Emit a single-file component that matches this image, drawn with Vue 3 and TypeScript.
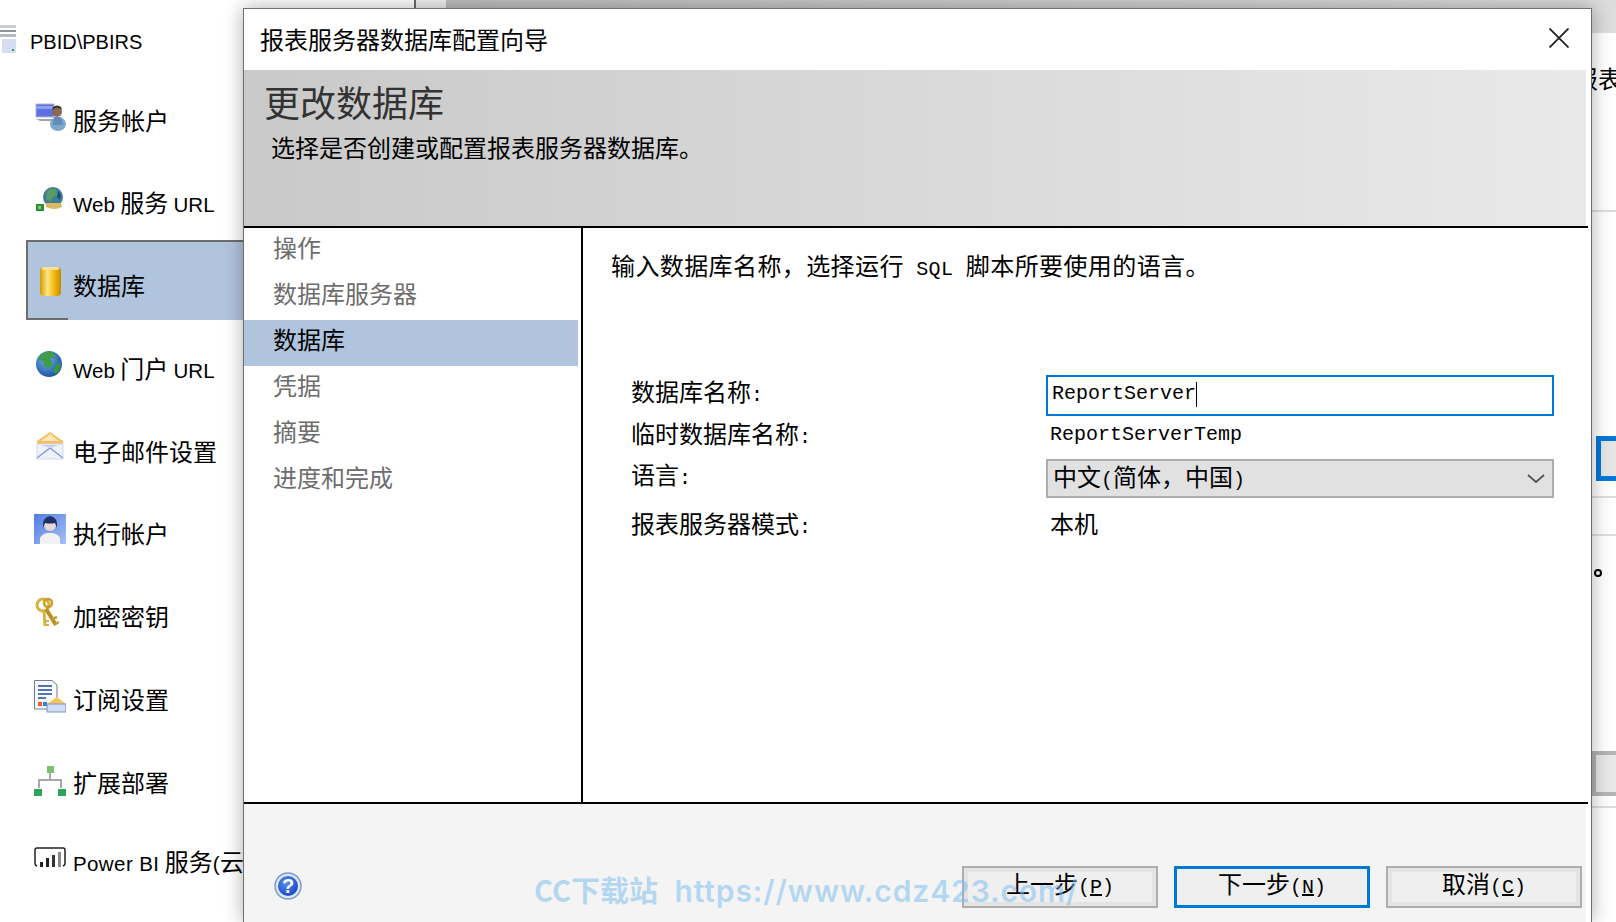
<script setup lang="ts">
interface SideItem {
  icon: string
  label: string
  active?: boolean
}

const sideItems: SideItem[] = [
  { icon: 'account', label: '服务帐户' },
  { icon: 'web', label: 'Web 服务 URL' },
  { icon: 'db', label: '数据库', active: true },
  { icon: 'globe', label: 'Web 门户 URL' },
  { icon: 'mail', label: '电子邮件设置' },
  { icon: 'exec', label: '执行帐户' },
  { icon: 'keys', label: '加密密钥' },
  { icon: 'sub', label: '订阅设置' },
  { icon: 'deploy', label: '扩展部署' },
  { icon: 'pbi', label: 'Power BI 服务(云)' },
]

const steps = ['操作', '数据库服务器', '数据库', '凭据', '摘要', '进度和完成']

// Latin runs are set smaller than the CJK text, so split them out
function splitLabel(label: string): { text: string; latin: boolean }[] {
  return label
    .split(/([A-Za-z]+(?: [A-Za-z]+)*|[()])/)
    .filter((t) => t !== '')
    .map((t) => ({ text: t, latin: /[A-Za-z()]/.test(t) }))
}
</script>

<template>
  <div class="desk">
    <aside class="side">
      <div class="server">
        <svg class="server-icon" width="16" height="28" viewBox="0 0 16 28">
          <rect x="0" y="0" width="16" height="3" fill="#c9ced6" />
          <rect x="0" y="5" width="16" height="2" fill="#8d939c" />
          <rect x="0" y="9" width="16" height="3" fill="#b4bac4" />
          <rect x="2" y="14" width="14" height="14" fill="#d4def0" />
          <rect x="12" y="24" width="2" height="2" fill="#2fa84a" />
        </svg>
        <span class="sans">PBID\PBIRS</span>
      </div>
      <div v-for="item in sideItems" :key="item.icon" class="side-row" :class="[item.icon, { active: item.active }]">
        <svg class="side-icon" width="32" height="34" viewBox="0 0 32 34">
          <template v-if="item.icon === 'account'">
            <rect x="2" y="3" width="18" height="13" fill="#5c72e4" stroke="#b4b8c4" />
            <rect x="2" y="5" width="18" height="3" fill="#8fa0f0" />
            <path d="M2 18h20v2H6z" fill="#a0a5ad" />
            <ellipse cx="24" cy="23" rx="8" ry="7" fill="#7fa6cc" />
            <circle cx="23" cy="11" r="5" fill="#8a6a55" />
            <path d="M18 9q5-5 10 0l-1-3q-4-3-8 0z" fill="#3c2c28" />
            <path d="M20 16h7l2 8h-10z" fill="#5f8cb8" />
          </template>
          <template v-else-if="item.icon === 'web'">
            <circle cx="19" cy="14" r="10" fill="#3e7d92" />
            <path d="M13 8q5-4 9-1l2 5-5 2-2 5-5-3z" fill="#5a9a66" />
            <path d="M24 8l3 4-1 5-3-3z" fill="#1d4a86" />
            <path d="M12 20h15l1 4q-8 4-16 0z" fill="#d8b964" />
            <rect x="2" y="21" width="8" height="7" fill="#2d8c3a" />
            <path d="M4 23h3v3H4z" fill="#86cc72" />
          </template>
          <template v-else-if="item.icon === 'db'">
            <defs>
              <linearGradient id="dbFill" x1="0" x2="1" y1="0" y2="0">
                <stop offset="0" stop-color="#d49a05" />
                <stop offset="0.35" stop-color="#ffe680" />
                <stop offset="0.7" stop-color="#f2b60c" />
                <stop offset="1" stop-color="#c48a08" />
              </linearGradient>
            </defs>
            <rect x="6" y="1" width="21" height="29" rx="4" fill="url(#dbFill)" />
            <rect x="8" y="1" width="17" height="3" rx="1.5" fill="#f6df9a" />
          </template>
          <template v-else-if="item.icon === 'globe'">
            <defs>
              <radialGradient id="globeFill" cx="0.4" cy="0.35" r="0.8">
                <stop offset="0" stop-color="#6fb2e4" />
                <stop offset="1" stop-color="#0f3f94" />
              </radialGradient>
            </defs>
            <circle cx="15" cy="15" r="13" fill="url(#globeFill)" />
            <path d="M6 7q6-6 13-4l2 5-5 2 3 5-4 4-5-2-1-5-4-1z" fill="#3f9c4a" />
            <path d="M21 16l6-2-1 6-4 5-3-2z" fill="#38944a" />
          </template>
          <template v-else-if="item.icon === 'mail'">
            <path d="M16 0L29 9v3H3V9z" fill="#f6bd62" />
            <path d="M16 2L25 9H7z" fill="#fce8b8" />
            <rect x="3" y="12" width="26" height="15" fill="#eef2fc" stroke="#d0d9ee" />
            <path d="M3 26l13-10 13 10" fill="none" stroke="#8a9ed4" stroke-width="1.5" />
            <path d="M7 13h18l-9 3z" fill="#c4d2f0" />
          </template>
          <template v-else-if="item.icon === 'exec'">
            <defs>
              <linearGradient id="execFill" x1="0" x2="1" y1="0" y2="1">
                <stop offset="0" stop-color="#4f7de4" />
                <stop offset="1" stop-color="#a8c0f2" />
              </linearGradient>
            </defs>
            <rect x="0" y="0" width="32" height="30" fill="url(#execFill)" />
            <path d="M6 30v-6q2-4 7-5h6q5 1 7 5v6z" fill="#f2f2f6" />
            <circle cx="16" cy="11" r="6" fill="#e6d8d4" />
            <path d="M9 14q-1-11 7-12 8 1 7 12l-2-5q-5 1-10 0z" fill="#1f2f6a" />
          </template>
          <template v-else-if="item.icon === 'keys'">
            <circle cx="9" cy="8" r="6" fill="none" stroke="#d9b23f" stroke-width="3" />
            <circle cx="14" cy="6" r="4" fill="none" stroke="#c99b27" stroke-width="2.5" />
            <path d="M12 12l10 16" stroke="#b98f22" stroke-width="4" />
            <path d="M18 22l5-2M21 27l4-2" stroke="#c9a02e" stroke-width="2.5" />
            <path d="M10 14l1 15" stroke="#d8b13e" stroke-width="3" />
            <path d="M11 24h4M11 28h4" stroke="#d8b13e" stroke-width="2" />
          </template>
          <template v-else-if="item.icon === 'sub'">
            <path d="M0.5 0.5H18L23 5V29H0.500z" fill="#f8f9fd" stroke="#6f7d9c" />
            <path d="M4 6h14M4 10h14M4 14h14M4 18h8" stroke="#5573b4" stroke-width="2" />
            <rect x="4" y="22" width="4" height="4" fill="#f05a28" />
            <rect x="9" y="22" width="4" height="4" fill="#3c78d8" />
            <path d="M23 17l9 7v8H13v-8z" fill="#f4c65c" />
            <rect x="13" y="24" width="19" height="8" fill="#cfdcf4" stroke="#7f94c8" />
          </template>
          <template v-else-if="item.icon === 'deploy'">
            <path d="M16 8v8M5 25v-8h22v8" fill="none" stroke="#a8a8a8" stroke-width="2" />
            <rect x="13" y="3" width="7" height="7" fill="#7cc070" />
            <rect x="0" y="26" width="8" height="7" fill="#2fa35a" />
            <rect x="24" y="26" width="8" height="7" fill="#2fa35a" />
          </template>
          <template v-else-if="item.icon === 'pbi'">
            <path d="M1 18V5a2 2 0 0 1 2-2h26a2 2 0 0 1 2 2v13a3 3 0 0 1-2 3" fill="none" stroke="#222" stroke-width="1.5" />
            <path d="M1 18a3 3 0 0 0 2 3" fill="none" stroke="#222" stroke-width="1.5" />
            <rect x="6" y="17" width="3" height="5" fill="#222" />
            <rect x="12" y="13" width="3" height="9" fill="#222" />
            <rect x="18" y="10" width="3" height="12" fill="#333" />
            <rect x="24" y="7" width="3" height="15" fill="#888" />
          </template>
        </svg>
        <span class="side-label">
          <span v-for="(part, i) in splitLabel(item.label)" :key="i" :class="{ sans: part.latin }">{{ part.text }}</span>
        </span>
      </div>
    </aside>

    <div class="backwin">
      <div class="back-top">
        <i class="back-top-line"></i>
        <i class="back-top-pane"></i>
        <i class="back-top-band"></i>
      </div>
      <div class="back-text">报表</div>
      <div class="back-line line-a"></div>
      <div class="back-btn-blue"></div>
      <div class="back-line line-b"></div>
      <div class="back-line line-c"></div>
      <div class="back-dot"></div>
      <div class="back-btn-gray"></div>
      <div class="back-line line-d"></div>
    </div>

    <section class="dialog">
      <header class="titlebar">
        <span>报表服务器数据库配置向导</span>
        <svg class="close" width="20" height="20" viewBox="0 0 20 20">
          <path d="M0.500 0.500L19.500 19.500M19.500 0.500L0.500 19.500" stroke="#222" stroke-width="1.8" fill="none" />
        </svg>
      </header>
      <div class="banner">
        <div class="banner-title">更改数据库</div>
        <div class="banner-sub">选择是否创建或配置报表服务器数据库。</div>
      </div>
      <div class="rule"></div>
      <div class="main">
        <nav class="steps">
          <div v-for="step in steps" :key="step" class="step" :class="{ current: step === '数据库' }">{{ step }}</div>
        </nav>
        <div class="content">
          <p class="intro">输入数据库名称，选择运行<span class="mono"> SQL </span>脚本所要使用的语言。</p>
          <div class="form">
            <div class="label">数据库名称<span class="mono">:</span></div>
            <div class="input"><span class="mono">ReportServer</span><i class="caret"></i></div>
            <div class="label">临时数据库名称<span class="mono">:</span></div>
            <div class="value mono">ReportServerTemp</div>
            <div class="label">语言<span class="mono">:</span></div>
            <div class="select">
              <span>中文<span class="mono">(</span>简体，中国<span class="mono">)</span></span>
              <svg width="18" height="10" viewBox="0 0 18 10">
                <path d="M1 1l8 7 8-7" fill="none" stroke="#555" stroke-width="1.8" />
              </svg>
            </div>
            <div class="label">报表服务器模式<span class="mono">:</span></div>
            <div class="value plain">本机</div>
          </div>
        </div>
      </div>
      <div class="rule"></div>
      <footer class="footer">
        <svg class="help" width="28" height="28" viewBox="0 0 28 28">
          <defs>
            <radialGradient id="helpFill" cx="0.4" cy="0.35" r="0.8">
              <stop offset="0" stop-color="#5a8cf0" />
              <stop offset="1" stop-color="#0c3cc0" />
            </radialGradient>
          </defs>
          <circle cx="14" cy="14" r="13" fill="#dbe6f6" stroke="#7d9cc8" stroke-width="1.5" />
          <circle cx="14" cy="14" r="10" fill="url(#helpFill)" />
          <text x="14" y="21" text-anchor="middle" font-size="20" font-weight="700" font-family="Liberation Sans, sans-serif" fill="#fff">?</text>
        </svg>
        <div class="buttons">
          <button class="btn" type="button">上一步<span class="mono">(<u>P</u>)</span></button>
          <button class="btn primary" type="button">下一步<span class="mono">(<u>N</u>)</span></button>
          <button class="btn" type="button">取消<span class="mono">(<u>C</u>)</span></button>
        </div>
      </footer>
    </section>

    <div class="watermark">CC下载站 <span class="watermark-url">https://www.cdz423.com/</span></div>
  </div>
</template>

<style>
html,
body {
  margin: 0;
  background: #fff;
  overflow: hidden;
}
</style>

<style scoped>
.desk {
  position: relative;
  display: flex;
  width: 1616px;
  height: 922px;
  overflow: hidden;
  background: #fff;
  color: #000;
  font-family: "Noto Sans CJK SC", sans-serif;
  font-size: 24px;
  line-height: 28px;
}

.sans {
  font-family: "Liberation Sans", "Noto Sans CJK SC", sans-serif;
  font-size: 20.500px;
}

.mono {
  font-family: "Liberation Mono", monospace;
  font-size: 20px;
}

/* left list */
.side {
  flex: 0 0 243px;
  width: 243px;
}

.server {
  display: flex;
  align-items: flex-start;
  gap: 14px;
  height: 74.5px;
  padding-top: 25px;
  box-sizing: border-box;
}

.server .sans {
  margin-top: 3px;
  font-size: 20px;
}

.side-row {
  position: relative;
  display: flex;
  gap: 7px;
  height: 80px;
  margin: 0 0 2.75px 26px;
  padding: 26px 0 0 8px;
  box-sizing: border-box;
  white-space: nowrap;
}

.side-row.active {
  background: #b0c4de;
  box-shadow: inset 2px 2px 0 #6e6e6e;
}

.side-row.active::after {
  content: "";
  position: absolute;
  left: 0;
  bottom: 0;
  width: 42px;
  height: 2px;
  background: #6e6e6e;
}

.side-icon {
  flex: none;
}

.side-label {
  margin-top: 5px;
}

.side-row.pbi .side-label {
  margin-top: 2px;
}

.side-row.pbi .sans {
  letter-spacing: 0.4px;
}

/* window behind the dialog */
.backwin {
  flex: 1;
  display: flex;
  flex-direction: column;
  align-items: flex-end;
  min-width: 0;
}

.back-top {
  display: flex;
  width: 100%;
  height: 33px;
  flex: none;
}

.back-top-line {
  margin-left: 171px;
  width: 2px;
  background: #6a6a6a;
}

.back-top-pane {
  width: 30px;
  background: #f0f0f0;
}

.back-top-band {
  flex: 1;
  background: linear-gradient(90deg, #bdbdbd, #dcdcdc);
}

.back-text {
  width: 42px;
  height: 28px;
  margin-top: 31px;
  overflow: hidden;
  white-space: nowrap;
  flex: none;
}

.back-line {
  flex: none;
  width: 24px;
  height: 2px;
  background: #dedede;
}

.line-a {
  margin-top: 118px;
}

.back-btn-blue {
  flex: none;
  box-sizing: border-box;
  width: 20px;
  height: 45px;
  margin-top: 224px;
  border: 5px solid #0078d7;
  border-right: 0;
  background: #e6e6e6;
}

.line-b {
  margin-top: 15px;
}

.line-c {
  margin-top: 36px;
}

.back-dot {
  flex: none;
  box-sizing: border-box;
  width: 8px;
  height: 8px;
  margin: 33px 14px 0 0;
  border: 2px solid #000;
  border-radius: 50%;
}

.back-btn-gray {
  flex: none;
  box-sizing: border-box;
  width: 24px;
  height: 45px;
  margin-top: 174px;
  border: 4px solid #b4b4b4;
  border-right: 0;
  background: #e8e8e8;
}

.line-d {
  margin-top: 10px;
}

/* dialog */
.dialog {
  position: absolute;
  left: 243px;
  top: 8px;
  display: flex;
  flex-direction: column;
  box-sizing: border-box;
  width: 1349px;
  height: 914px;
  border: 1px solid #6f6f6f;
  border-bottom: 0;
  background: #fff;
  box-shadow: 0 0 18px rgba(0, 0, 0, 0.32);
}

.titlebar {
  display: flex;
  align-items: center;
  justify-content: space-between;
  flex: none;
  height: 61px;
  padding: 0 22px 2px 16px;
  box-sizing: border-box;
}

.close {
  margin-top: -2px;
}

.banner {
  flex: none;
  box-sizing: border-box;
  height: 156px;
  margin-right: 5px;
  padding: 9px 0 0 20px;
  background: linear-gradient(90deg, #c9c9c9, #e9e9e9);
}

.banner-title {
  font-size: 36px;
  line-height: 44px;
  color: #333;
}

.banner-sub {
  margin: 10px 0 0 7px;
}

.rule {
  flex: none;
  height: 2px;
  margin-right: 3px;
  background: #000;
}

.main {
  display: flex;
  flex: none;
  height: 574px;
}

.steps {
  flex: none;
  box-sizing: border-box;
  width: 339px;
  padding-right: 3px;
  border-right: 2px solid #000;
}

.step {
  height: 46px;
  padding-left: 29px;
  line-height: 38px;
  color: #6d6d6d;
}

.step.current {
  background: #b0c4de;
  color: #000;
}

.content {
  flex: 1;
  padding: 23px 0 0 28px;
}

.intro {
  margin: 0;
  letter-spacing: 0.4px;
}

.form {
  display: grid;
  grid-template-columns: 414px 508px;
  grid-template-rows: 41px 43px 39px 60px;
  align-items: center;
  margin: 91px 0 0 21px;
}

.label,
.value {
  padding-bottom: 5px;
}

.value.plain {
  padding-bottom: 10px;
}

.label {
  margin-left: -1px;
  line-height: 36px;
}

.input {
  display: flex;
  align-items: center;
  align-self: stretch;
  box-sizing: border-box;
  padding: 0 0 3px 4px;
  border: 2px solid #0078d7;
}

.caret {
  width: 1px;
  height: 25px;
  background: #000;
}

.value {
  padding-left: 4px;
}

.select {
  display: flex;
  align-items: center;
  justify-content: space-between;
  align-self: stretch;
  box-sizing: border-box;
  padding: 0 7px 0 5px;
  border: 2px solid #adadad;
  background: #e1e1e1;
}

.footer {
  display: flex;
  justify-content: space-between;
  flex: 1;
  margin-right: 5px;
  padding: 62px 4px 0 30px;
  background: #f4f4f4;
}

.help {
  margin-top: 6px;
}

.buttons {
  display: flex;
  gap: 16px;
}

.btn {
  width: 196px;
  height: 42px;
  box-sizing: border-box;
  padding: 0 0 3px;
  border: 2px solid #adadad;
  background: #efefef;
  box-shadow: inset 0 0 0 4px #e3e3e3;
  color: #000;
  font-family: inherit;
  font-size: 24px;
  line-height: 28px;
}

.btn.primary {
  border: 3px solid #0078d7;
  box-shadow: none;
}

.watermark {
  position: absolute;
  left: 534px;
  top: 871px;
  color: rgba(125, 190, 240, 0.55);
  font-family: "Noto Sans CJK SC", sans-serif;
  font-size: 29px;
  font-weight: 700;
  line-height: 36px;
  white-space: pre;
  pointer-events: none;
}

.watermark-url {
  margin-left: 10px;
  font-family: "Inter", sans-serif;
  font-size: 30px;
  font-weight: 600;
  letter-spacing: 0.9px;
}
</style>
